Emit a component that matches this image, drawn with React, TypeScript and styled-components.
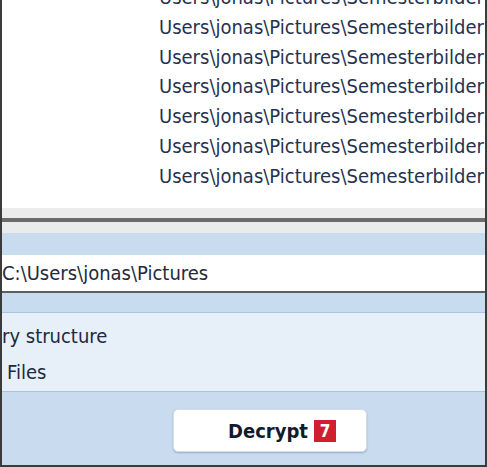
import styled, { createGlobalStyle } from 'styled-components'

const GlobalStyle = createGlobalStyle`
  html, body {
    margin: 0;
    padding: 0;
    background: #ffffff;
  }
  body {
    font-family: "DejaVu Sans Condensed", "DejaVu Sans", sans-serif;
  }
`

const paths: string[] = Array.from({ length: 7 }, () => 'Users\\jonas\\Pictures\\Semesterbilder')

const App = () => {
	return (
		<>
			<GlobalStyle />
			<Frame>
				<FileList>
					{paths.map((p, idx) => (
						<FileRow key={idx}>{p}</FileRow>
					))}
				</FileList>
				<Splitter />
				<BlueBand />
				<PathField>C:\Users\jonas\Pictures</PathField>
				<BlueBand $height={19} />
				<Options>
					<OptionLabel $indent={0}>ry structure</OptionLabel>
					<OptionLabel $indent={5}>Files</OptionLabel>
				</Options>
				<Footer>
					<DecryptButton>
						Decrypt
						<Badge>7</Badge>
					</DecryptButton>
				</Footer>
			</Frame>
		</>
	)
}

export default App

const Frame = styled.div`
  width: 487px;
  height: 467px;
  box-sizing: border-box;
  border-left: 2px solid #3b3b3b;
  border-right: 2px solid #3b3b3b;
  border-bottom: 2px solid #3b3b3b;
  display: flex;
  flex-direction: column;
  overflow: hidden;
  background: #c9dcef;
`

const FileList = styled.div`
  height: 208px;
  flex: none;
  background: #ffffff;
  overflow: hidden;
  padding-left: 157px;
`

const FileRow = styled.div`
  height: 29.8px;
  line-height: 29.8px;
  font-size: 20px;
  color: #263250;
  white-space: nowrap;
  &:first-child {
    margin-top: -17px;
  }
`

const Splitter = styled.div`
  flex: none;
  height: 10px;
  background: #ececec;
  border-bottom: 4px solid #6b6b6b;
  & + * {
    border-top: 11px solid #e9ebed;
  }
`

const BlueBand = styled.div<{ $height?: number }>`
  flex: none;
  height: ${p => p.$height ?? 22}px;
  background: #c8dcf0;
`

const PathField = styled.div`
  flex: none;
  height: 36px;
  line-height: 36px;
  background: #ffffff;
  border-bottom: 2px solid #5e5e5e;
  font-size: 20px;
  color: #222a3a;
  white-space: nowrap;
`

const Options = styled.div`
  flex: none;
  box-sizing: border-box;
  height: 80px;
  background: #e7f0f9;
  border-top: 1px solid #a9c4e2;
  border-bottom: 1px solid #aac2de;
  display: flex;
  flex-direction: column;
  padding-top: 5px;
`

const OptionLabel = styled.div<{ $indent: number }>`
  height: 36px;
  line-height: 36px;
  padding-left: ${p => p.$indent}px;
  font-size: 20px;
  color: #222a3a;
  white-space: nowrap;
`

const Footer = styled.div`
  flex: 1;
  display: flex;
  align-items: flex-start;
  padding-top: 17px;
  padding-left: 171px;
`

const DecryptButton = styled.button`
  width: 194px;
  height: 43px;
  background: #ffffff;
  border: 1px solid #d6dde6;
  border-radius: 5px;
  box-shadow: 0 1px 2px rgba(60, 80, 110, 0.35);
  display: flex;
  align-items: center;
  justify-content: center;
  gap: 6px;
  padding: 0 0 0 24px;
  font-family: "DejaVu Sans Condensed", "DejaVu Sans", sans-serif;
  font-weight: bold;
  font-size: 20px;
  color: #141a2a;
`

const Badge = styled.span`
  width: 22px;
  height: 22px;
  background: #d0202f;
  color: #ffffff;
  font-size: 17px;
  font-weight: bold;
  display: flex;
  align-items: center;
  justify-content: center;
`
